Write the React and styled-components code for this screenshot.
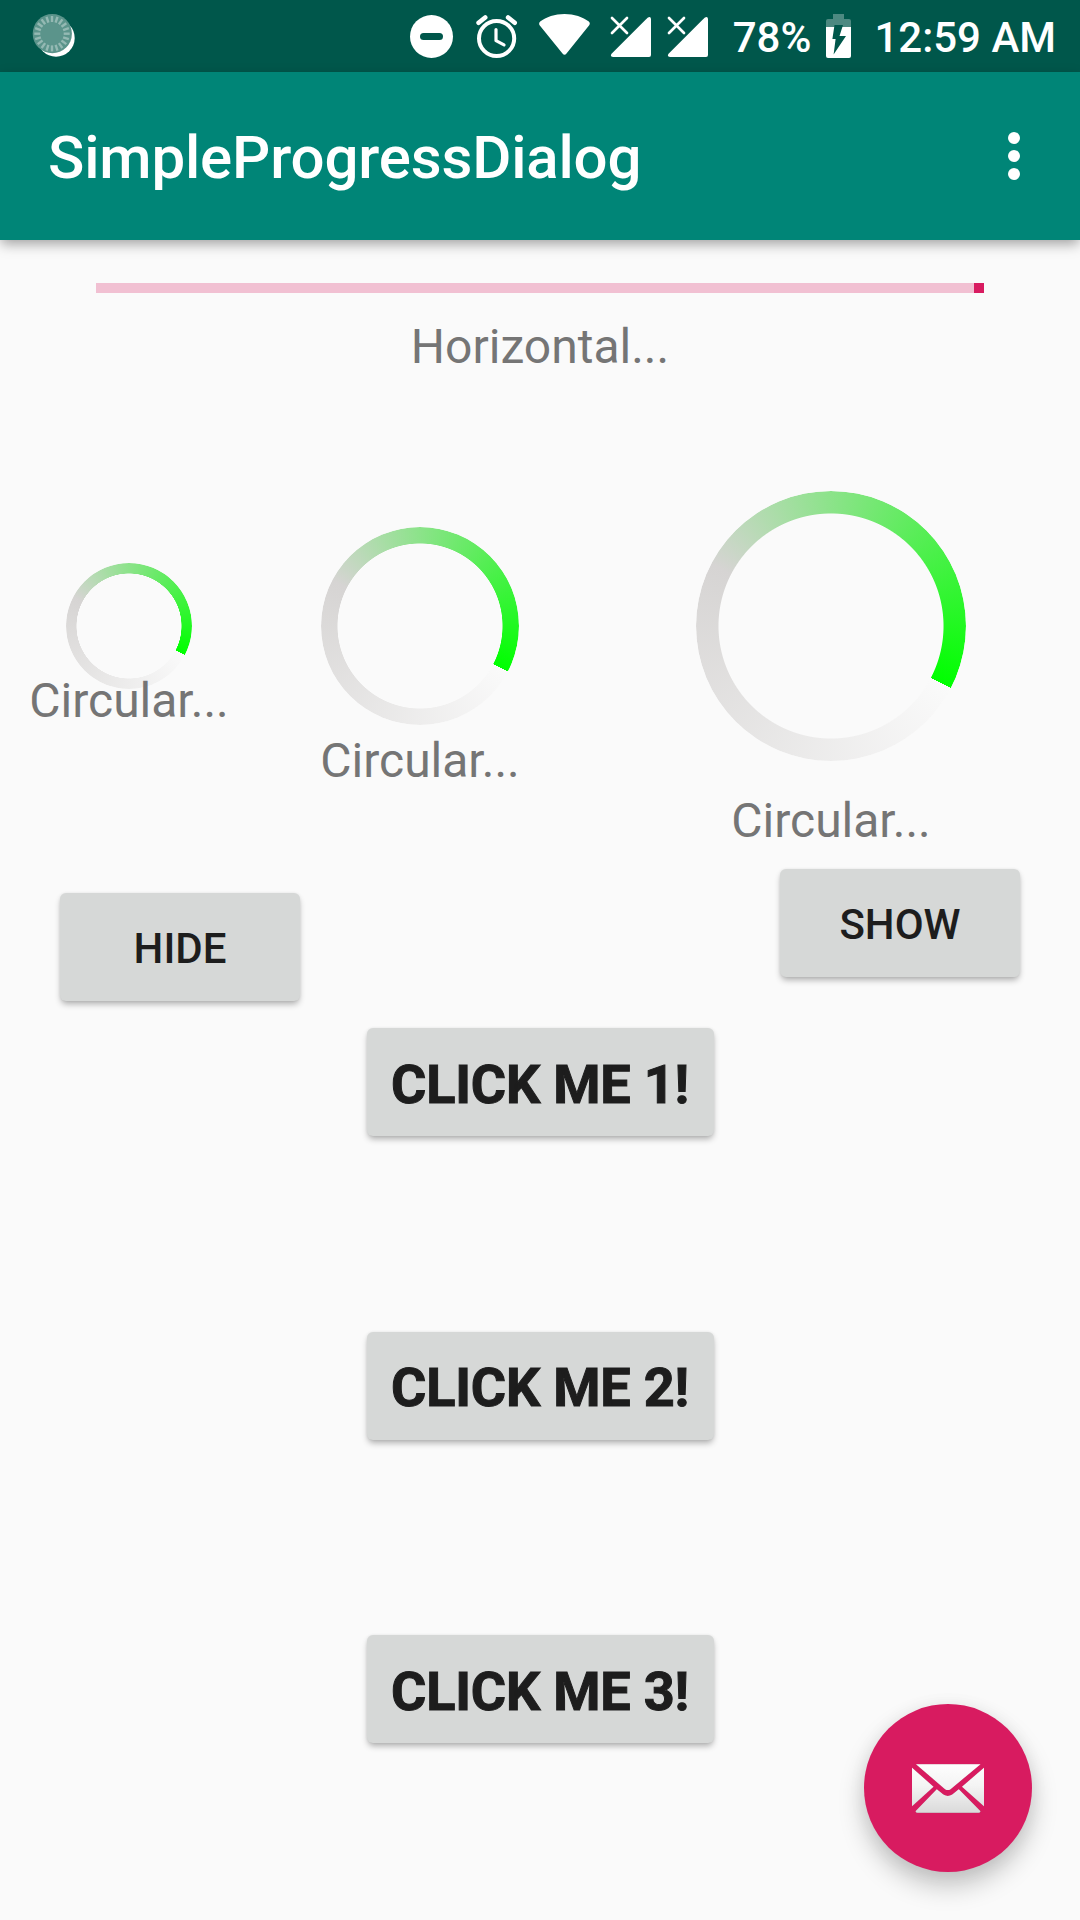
import React from "react";
import styled, { createGlobalStyle } from "styled-components";

const GlobalStyle = createGlobalStyle`
  * { box-sizing: border-box; }
  body { margin: 0; background: #fafafa; font-family: Roboto, "Noto Sans", sans-serif; }
  button { font-family: inherit; border: 0; padding: 0; }
`;

const Screen = styled.div`
  width: 1080px;
  height: 1920px;
  display: flex;
  flex-direction: column;
  position: relative;
  overflow: hidden;
  background: #fafafa;
`;

const StatusBar = styled.div`
  height: 72px;
  flex: none;
  display: flex;
  align-items: center;
  padding: 0 24px 0 32px;
  background: #00574b;
  color: #fff;
`;

const StatusIcon = styled.svg`
  flex: none;
  width: ${(p) => p.$w}px;
  height: 72px;
  margin-left: ${(p) => p.$gap || 0}px;
  margin-right: ${(p) => (p.$push ? "auto" : 0)};
`;

const StatusText = styled.span`
  font-size: 42px;
  font-weight: 500;
  line-height: 50px;
  white-space: nowrap;
  margin-left: ${(p) => p.$gap}px;
  padding-top: 4px;
`;

const Toolbar = styled.header`
  height: 168px;
  flex: none;
  display: flex;
  align-items: center;
  justify-content: space-between;
  padding: 0 48px;
  background: #008577;
  box-shadow: 0 5px 12px -1px rgba(0, 0, 0, 0.36);
`;

const Title = styled.h1`
  margin: 0;
  padding-top: 4px;
  font-size: 60px;
  line-height: 70px;
  font-weight: 500;
  letter-spacing: -0.16px;
  color: #fff;
`;

const MenuButton = styled.button`
  display: flex;
  flex-direction: column;
  align-items: center;
  gap: 6px;
  width: 36px;
  background: none;
`;

const MenuDot = styled.span`
  width: 12px;
  height: 12px;
  border-radius: 50%;
  background: #fff;
`;

const Content = styled.main`
  flex: 1;
  display: flex;
  flex-direction: column;
  align-items: stretch;
`;

const Track = styled.div`
  display: flex;
  justify-content: flex-end;
  height: 10px;
  margin: 43px 96px 0;
  background: #f1c0d2;
`;

const TrackHead = styled.div`
  width: 10px;
  background: #d81b60;
`;

const Caption = styled.p`
  margin: ${(p) => p.$top}px 0 0;
  font-size: 48px;
  line-height: 56px;
  text-align: center;
  color: #757575;
  position: relative;
`;

const Dials = styled.section`
  display: grid;
  grid-template-columns: 258px 324px 498px;
  height: 358px;
  margin-top: 116px;
`;

const Dial = styled.div`
  display: flex;
  flex-direction: column;
  align-items: center;
  padding-top: ${(p) => (270 - p.$size) / 2}px;
`;

const Ring = styled.div`
  flex: none;
  width: ${(p) => p.$size}px;
  height: ${(p) => p.$size}px;
  border-radius: 50%;
  background: conic-gradient(from 117.4deg, #fafafa, #d6d4d3 50%, #00ff00);
  mask: radial-gradient(closest-side, transparent 83%, #000 83.7%);
`;

const Actions = styled.div`
  display: flex;
  justify-content: space-between;
  align-items: flex-start;
  height: 132px;
  margin-top: 20px;
  padding: 0 60px;
`;

const Button = styled.button`
  width: ${(p) => p.$w}px;
  height: 108px;
  margin-top: ${(p) => p.$drop || 0}px;
  border-radius: 6px;
  background: #d6d8d7;
  color: #1d1d1d;
  font-size: ${(p) => (p.$big ? 54 : 42)}px;
  font-weight: ${(p) => (p.$big ? 700 : 500)};
  line-height: 1.17;
  text-transform: uppercase;
  white-space: nowrap;
  padding-top: ${(p) => (p.$big ? 5 : 3)}px;
  -webkit-text-stroke: ${(p) => (p.$big ? 1 : 0)}px #1d1d1d;
  letter-spacing: ${(p) => (p.$big ? -0.2 : 0)}px;
  box-shadow: 0 4px 6px -1px rgba(0, 0, 0, 0.3), 0 0 3px rgba(0, 0, 0, 0.07);
`;

const Stack = styled.div`
  display: flex;
  flex-direction: column;
  align-items: center;
  gap: 195.5px;
  margin-top: 27px;
`;

const Fab = styled.button`
  position: absolute;
  right: 48px;
  bottom: 48px;
  width: 168px;
  height: 168px;
  border-radius: 50%;
  display: flex;
  align-items: center;
  justify-content: center;
  background: #d81b60;
  box-shadow: 0 14px 26px rgba(0, 0, 0, 0.22), 0 2px 18px rgba(0, 0, 0, 0.06);
`;

const ticks = Array.from({ length: 20 }, (_, i) => i * 18);

function SpinnerIcon() {
  return (
    <StatusIcon $w={44} $push viewBox="0 0 44 72">
      <defs>
        <filter id="soft" x="-20%" y="-20%" width="140%" height="140%">
          <feGaussianBlur stdDeviation="0.7" />
        </filter>
      </defs>
      <circle cx="24" cy="38" r="18.7" fill="#fff" filter="url(#soft)" />
      <circle cx="20.3" cy="33.700" r="19.600" fill="#5b948b" />
      {ticks.map((a) => (
        <line key={a} x1="20" y1="16" x2="20" y2="22" stroke="#94b9b3" strokeWidth="2.4" transform={`rotate(${a} 20 33.7)`} />
      ))}
    </StatusIcon>
  );
}

function DndIcon() {
  return (
    <StatusIcon $w={44} viewBox="410 0 44 72">
      <circle cx="431.5" cy="36.5" r="21.5" fill="#fff" />
      <rect x="420" y="33" width="23" height="7" rx="3.5" fill="#00574b" />
    </StatusIcon>
  );
}

function AlarmIcon() {
  return (
    <StatusIcon $w={44} $gap={21} viewBox="475 0 44 72">
      <g fill="none" stroke="#fff" strokeLinecap="round">
        <circle cx="496.6" cy="38.5" r="17.6" strokeWidth="4" />
        <path d="M478.6 22.8l6.6-5.3M514.7 22.8l-6.6-5.3" strokeWidth="4.6" />
        <path d="M496 29.5v11.2l8 4.2" strokeWidth="3.2" strokeLinejoin="round" />
      </g>
    </StatusIcon>
  );
}

function WifiIcon() {
  return (
    <StatusIcon $w={52} $gap={20} viewBox="539 0 52 72">
      <path d="M540.2 21.6C546 17 555 14 564.5 14s18.5 3 24.3 7.6q1.8 1.6.4 3.6L566.5 53.6q-2 2.4-4 0L539.6 25.2q-1.2-2 .6-3.6z" fill="#fff" />
    </StatusIcon>
  );
}

function SignalIcon({ gap }) {
  return (
    <StatusIcon $w={42} $gap={gap} viewBox="610 0 42 72">
      <path d="M651 19v36q0 2-2 2h-36q-3.5-.4-1.2-3.4L647.6 17.8q3-2.2 3.4 1.2z" fill="#fff" />
      <path d="M612 18l15 15M627 18l-15 15" stroke="#fff" strokeWidth="2.7" strokeLinecap="round" />
    </StatusIcon>
  );
}

function BatteryIcon() {
  return (
    <StatusIcon $w={26} $gap={15} viewBox="826 0 26 72">
      <path d="M833 14h11v5h5q2 0 2 2v6h-25v-6q0-2 2-2h5z" fill="#4d8981" />
      <path d="M826 27h25v29q0 2-2 2h-21q-2 0-2-2z" fill="#fff" />
      <path d="M834.5 25h8.500l-3.500 11h6.500L833.600 54.500 835.600 39h-3.200z" fill="#00574b" />
    </StatusIcon>
  );
}

function MailIcon() {
  return (
    <svg width="72" height="54" viewBox="0 -0.7 72 54">
      <defs>
        <linearGradient id="paper" x1="0" y1="1" x2="0" y2="52" gradientUnits="userSpaceOnUse">
          <stop offset="0" stopColor="#fff" />
          <stop offset="0.45" stopColor="#f4f4f4" />
          <stop offset="1" stopColor="#d9d9d9" />
        </linearGradient>
        <filter id="edge" x="-10%" y="-10%" width="120%" height="120%">
          <feDropShadow dx="0" dy="0" stdDeviation="0.7" floodColor="#5a3040" floodOpacity="0.75" />
        </filter>
      </defs>
      <g fill="url(#paper)" filter="url(#edge)">
        <path d="M4 2.5h64.500L38.500 27.500q-2.700 1.800-5.400 0z" />
        <path d="M0 6L21.500 25 0 44.500z" />
        <path d="M72 6L50 25 72 44.500z" />
        <path d="M24.800 27.500l6.500 5.400q4.500 2.600 9 0l6.500-5.400L68.500 49.500q-.5 1.500-2 1.500h-61q-1.500 0-2-1.500z" />
      </g>
    </svg>
  );
}

const dials = [
  { size: 126, top: -16 },
  { size: 198, top: 8 },
  { size: 270, top: 32 },
];

export default function App() {
  return (
    <Screen>
      <GlobalStyle />
      <StatusBar>
        <SpinnerIcon />
        <DndIcon />
        <AlarmIcon />
        <WifiIcon />
        <SignalIcon gap={19} />
        <SignalIcon gap={15} />
        <StatusText $gap={24}>78%</StatusText>
        <BatteryIcon />
        <StatusText $gap={22}>12:59 AM</StatusText>
      </StatusBar>
      <Toolbar>
        <Title>SimpleProgressDialog</Title>
        <MenuButton aria-label="More options">
          <MenuDot />
          <MenuDot />
          <MenuDot />
        </MenuButton>
      </Toolbar>
      <Content>
        <Track>
          <TrackHead />
        </Track>
        <Caption $top={26}>Horizontal...</Caption>
        <Dials>
          {dials.map((d) => (
            <Dial key={d.size} $size={d.size}>
              <Ring $size={d.size} />
              <Caption $top={d.top}>Circular...</Caption>
            </Dial>
          ))}
        </Dials>
        <Actions>
          <Button $w={240} $drop={24}>Hide</Button>
          <Button $w={240}>Show</Button>
        </Actions>
        <Stack>
          <Button $w={347} $big>Click me 1!</Button>
          <Button $w={347} $big>Click me 2!</Button>
          <Button $w={347} $big>Click me 3!</Button>
        </Stack>
      </Content>
      <Fab aria-label="Send mail">
        <MailIcon />
      </Fab>
    </Screen>
  );
}
